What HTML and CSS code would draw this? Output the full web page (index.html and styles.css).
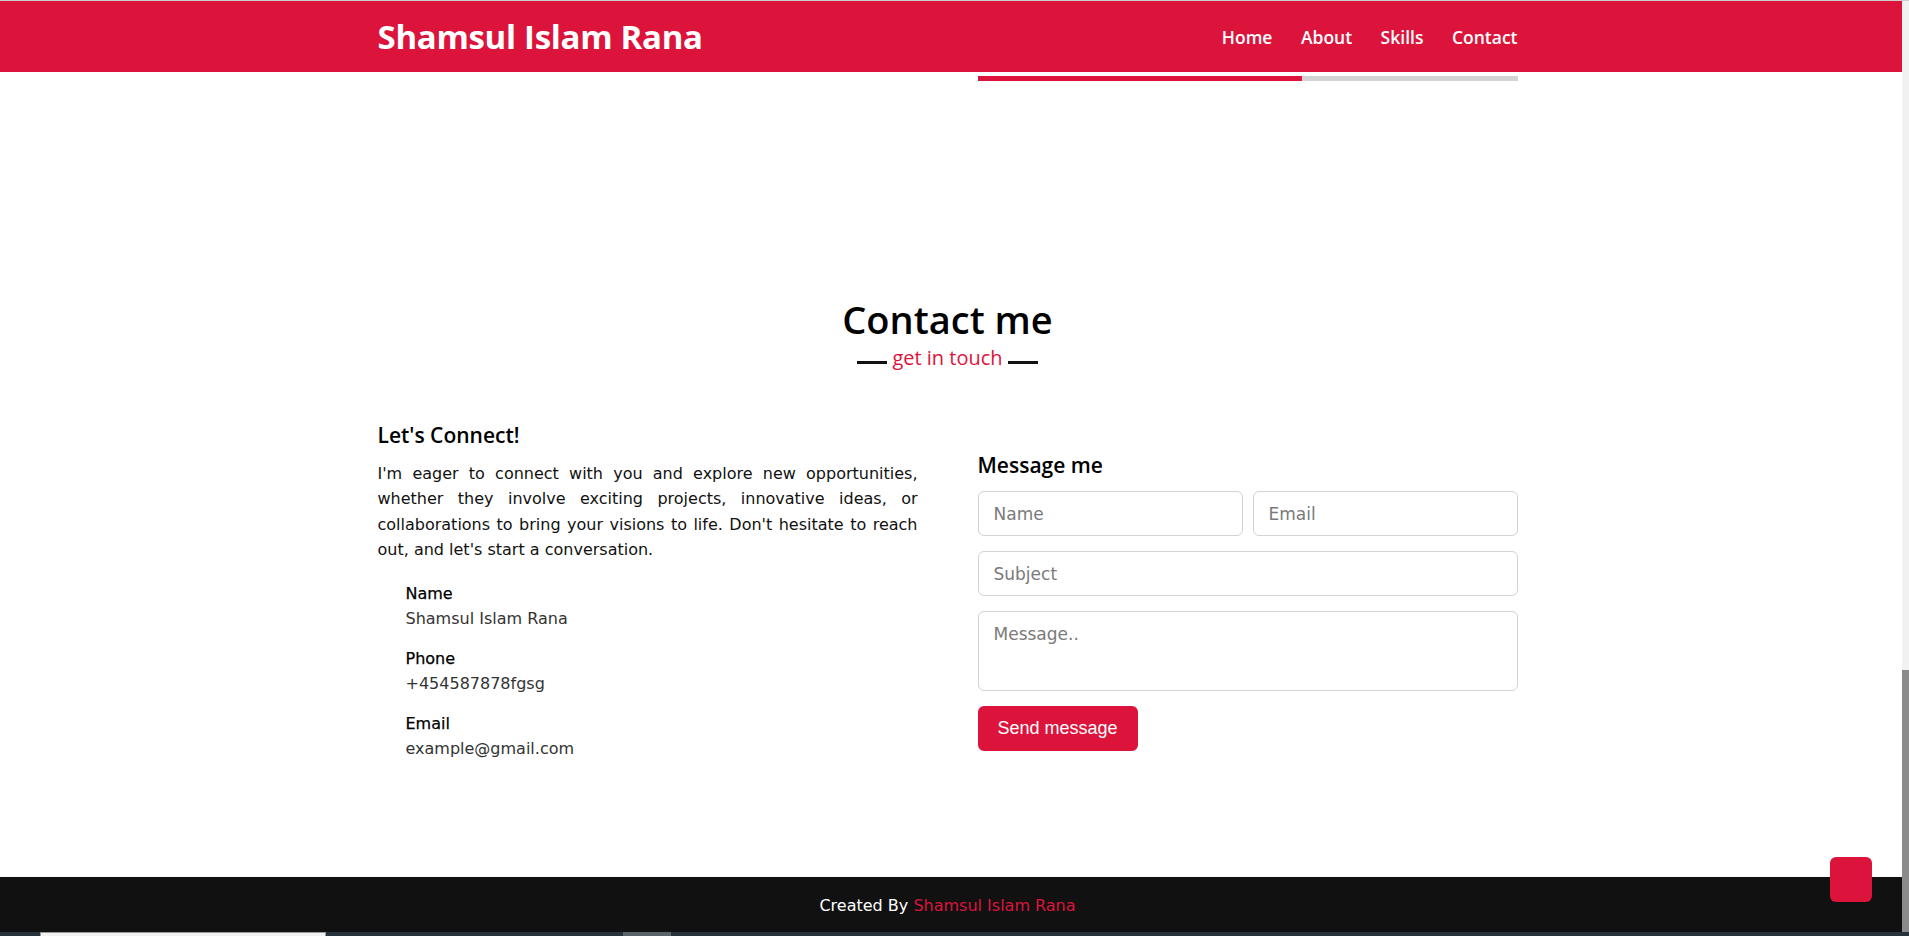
FILE: index.html
```html
<!DOCTYPE html>
<html lang="en">
<head>
<meta charset="utf-8">
<title>Shamsul Islam Rana</title>
<link rel="stylesheet" href="styles.css">
</head>
<body>
<div class="topline"></div>
<div class="viewport">
  <div class="page">
    <header class="navbar">
      <div class="container nav-inner">
        <a class="logo" href="#">Shamsul Islam Rana</a>
        <ul class="menu">
          <li><a href="#">Home</a></li>
          <li><a href="#">About</a></li>
          <li><a href="#">Skills</a></li>
          <li><a href="#">Contact</a></li>
        </ul>
      </div>
    </header>
    <main class="main">
      <div class="container skills-tail">
        <div></div>
        <div class="bar"><span class="fill" style="width:60%"></span></div>
      </div>
      <section class="contact">
        <div class="container">
          <h2 class="title">Contact me</h2>
          <div class="subtitle"><span class="rule"></span><span class="sub-text">get in touch</span><span class="rule"></span></div>
          <div class="contact-grid">
            <div class="left">
              <h3 class="heading">Let's Connect!</h3>
              <p class="intro">I'm eager to connect with you and explore new opportunities, whether they involve exciting projects, innovative ideas, or collaborations to bring your visions to life. Don't hesitate to reach out, and let's start a conversation.</p>
              <div class="icons">
                <div class="row"><div class="head">Name</div><div class="sub">Shamsul Islam Rana</div></div>
                <div class="row"><div class="head">Phone</div><div class="sub">+454587878fgsg</div></div>
                <div class="row"><div class="head">Email</div><div class="sub">example@gmail.com</div></div>
              </div>
            </div>
            <div class="right">
              <h3 class="heading">Message me</h3>
              <form class="form">
                <div class="fields">
                  <input type="text" placeholder="Name">
                  <input type="text" placeholder="Email">
                </div>
                <input type="text" placeholder="Subject">
                <textarea placeholder="Message.."></textarea>
                <div class="button-area"><button type="button">Send message</button></div>
              </form>
            </div>
          </div>
        </div>
      </section>
    </main>
    <footer class="footer">
      <span>Created By <a href="#">Shamsul Islam Rana</a></span>
    </footer>
  </div>
  <div class="scrollbar"><div class="track"></div><div class="thumb"></div></div>
</div>
<div class="taskbar">
  <span class="tb-gap1"></span>
  <span class="tb-white"></span>
  <span class="tb-gap2"></span>
  <span class="tb-gray"></span>
</div>
<a class="scroll-up" href="#" aria-label="Scroll up"></a>
</body>
</html>
```

FILE: styles.css
```css
* {
  box-sizing: border-box;
  margin: 0;
  padding: 0;
}

html, body {
  width: 1909px;
  height: 936px;
  overflow: hidden;
}

body {
  display: flex;
  flex-direction: column;
  background: #fff;
  font-family: "DejaVu Sans", sans-serif;
  color: #000;
}

a {
  text-decoration: none;
}

.topline {
  height: 1px;
  background: #cdcdcd;
  flex: none;
}

.viewport {
  flex: 1;
  display: flex;
  min-height: 0;
}

.page {
  flex: 1;
  display: flex;
  flex-direction: column;
  min-width: 0;
}

.container {
  width: 1140px;
  margin: 0 auto;
}

/* header */
.navbar {
  height: 71px;
  flex: none;
  background: #dc143c;
  padding-right: 7px;
  display: flex;
  align-items: center;
}

.nav-inner {
  display: flex;
  align-items: center;
  justify-content: space-between;
}

.logo {
  font-family: "Open Sans", sans-serif;
  font-weight: 700;
  font-size: 33px;
  letter-spacing: -0.3px;
  color: #fff;
  line-height: 40px;
}

.menu {
  list-style: none;
  display: flex;
}

.menu li {
  margin-left: 28.5px;
}

.menu a {
  font-family: "Open Sans", sans-serif;
  font-weight: 600;
  font-size: 17.5px;
  color: #fff;
  line-height: 24px;
}

/* main */
.main {
  flex: 1;
  padding-right: 7px;
  min-height: 0;
}

.skills-tail {
  display: grid;
  grid-template-columns: 1fr 1fr;
  column-gap: 60px;
  margin-top: 4px;
}

.bar {
  height: 5px;
  background: #d3d3d3;
  display: flex;
}

.fill {
  display: block;
  height: 100%;
  background: #dc143c;
}

.contact .title {
  margin-top: 214.4px;
  text-align: center;
  font-family: "Open Sans", sans-serif;
  font-weight: 600;
  font-size: 38px;
  line-height: 48px;
  color: #000;
}

.subtitle {
  margin-top: 3px;
  height: 24px;
  display: flex;
  justify-content: center;
}

.rule {
  width: 30px;
  height: 3px;
  background: #111;
  margin-top: 15px;
}

.sub-text {
  padding: 0 5px;
  font-family: "Open Sans", sans-serif;
  font-size: 20px;
  line-height: 24px;
  color: #dc143c;
}

.contact-grid {
  margin-top: 52px;
  display: grid;
  grid-template-columns: 1fr 1fr;
  column-gap: 60px;
}

.heading {
  font-family: "Open Sans", sans-serif;
  font-weight: 600;
  font-size: 21px;
  line-height: 26px;
  color: #000;
}

.intro {
  margin-top: 12.4px;
  font-size: 16px;
  line-height: 25.5px;
  text-align: justify;
  color: #111;
}

.icons {
  margin-top: 18.6px;
  padding-left: 28px;
}

.row {
  margin-bottom: 15px;
}

.row:last-child {
  margin-bottom: 0;
}

.head {
  font-size: 16px;
  line-height: 25px;
  color: #000;
  -webkit-text-stroke: 0.25px #000;
}

.sub {
  font-size: 16px;
  line-height: 25px;
  color: #333;
}

.right {
  padding-top: 29.7px;
}

.form {
  margin-top: 13px;
  display: flex;
  flex-direction: column;
  gap: 15px;
}

.fields {
  display: flex;
  gap: 10px;
}

.form input,
.form textarea {
  width: 100%;
  height: 45px;
  border: 1px solid #d3d3d3;
  border-radius: 6px;
  padding: 0 15px;
  font-family: "DejaVu Sans", sans-serif;
  font-size: 17px;
  color: #000;
  outline: none;
  background: #fff;
}

.form textarea {
  height: 80px;
  padding: 10px 15px;
  line-height: 1.5;
  resize: none;
  display: block;
}

.form ::placeholder {
  color: #7a7a7a;
}

.button-area {
  display: flex;
}

.button-area button {
  width: 160px;
  height: 45px;
  border: 2px solid #dc143c;
  background: #dc143c;
  color: #fff;
  border-radius: 6px;
  font-family: "Liberation Sans", Arial, sans-serif;
  font-size: 18px;
  cursor: pointer;
}

/* footer */
.footer {
  height: 55px;
  flex: none;
  background: #111;
  color: #fff;
  text-align: center;
  padding: 19px 7px 17px 0;
  font-size: 16px;
  line-height: 19px;
}

.footer a {
  color: #dc143c;
}

/* scrollbar */
.scrollbar {
  width: 7px;
  flex: none;
  display: flex;
  flex-direction: column;
  background: #f1f1f1;
}

.track {
  flex: 1;
}

.thumb {
  height: 262px;
  background: #8b8b8b;
}

/* taskbar strip */
.taskbar {
  height: 4px;
  flex: none;
  display: flex;
  background: #27333a;
}

.tb-gap1 {
  width: 40px;
}

.tb-white {
  width: 286px;
  background: #f2f2f2;
  border: 1px solid #9a9a9a;
  border-bottom: none;
}

.tb-gap2 {
  width: 297px;
}

.tb-gray {
  width: 48px;
  background: #59646a;
}

/* scroll-up button */
.scroll-up {
  position: fixed;
  left: 1830px;
  top: 857px;
  width: 42px;
  height: 45px;
  background: #dc143c;
  border-radius: 6px;
}
```
